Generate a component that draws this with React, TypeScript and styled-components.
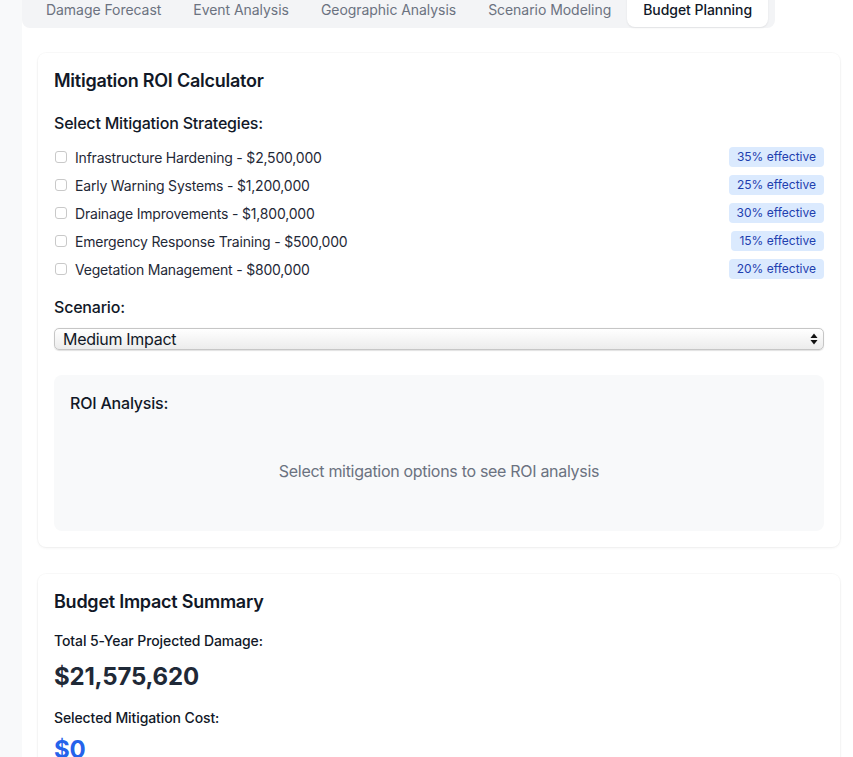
import React from "react";
import styled, { createGlobalStyle } from "styled-components";

const GlobalStyle = createGlobalStyle`
  html, body { margin: 0; padding: 0; background: #ffffff; }
  body { font-family: Inter, "Noto Sans", "Liberation Sans", sans-serif; color: #111827; overflow: hidden; }
  * { box-sizing: border-box; }
`;

const Shell = styled.div`
  display: flex;
  width: 853px;
  height: 757px;
  overflow: hidden;
`;

const Sidebar = styled.div`
  width: 22px;
  flex: none;
  background: #f8f9fa;
`;

const Main = styled.div`
  flex: 1;
  display: flex;
  flex-direction: column;
  background: #ffffff;
  margin-top: -10px;
`;

const TabBar = styled.div`
  align-self: flex-start;
  display: flex;
  align-items: stretch;
  background: #f3f4f6;
  border-radius: 0 0 8px 8px;
  padding: 0 7px 1px 8px;
`;

const Tab = styled.div<{ $active?: boolean }>`
  padding: 10px 16px 7px;
  font-size: 14px;
  line-height: 20px;
  letter-spacing: -0.05px;
  font-weight: ${(p) => (p.$active ? 500 : 400)};
  color: ${(p) => (p.$active ? "#111827" : "#6b7280")};
  background: ${(p) => (p.$active ? "#ffffff" : "transparent")};
  border-radius: 0 0 8px 8px;
  box-shadow: ${(p) => (p.$active ? "0 1px 2px rgba(0,0,0,0.08)" : "none")};
  white-space: nowrap;
`;

const Content = styled.div`
  display: flex;
  flex-direction: column;
  gap: 27px;
  padding: 25px 13px 0 16px;
`;

const Card = styled.section`
  background: #ffffff;
  border-radius: 8px;
  box-shadow: 0 1px 3px rgba(0, 0, 0, 0.06), 0 0 0 1px rgba(0, 0, 0, 0.02);
  padding: 16px;
`;

const CardTitle = styled.h2<{ $gap: number }>`
  margin: 0 0 ${(p) => p.$gap}px;
  font-size: 18px;
  line-height: 24px;
  font-weight: 600;
  letter-spacing: -0.25px;
  color: #111827;
`;

const SectionLabel = styled.h3<{ $gap: number }>`
  margin: 0 0 ${(p) => p.$gap}px;
  font-size: 16px;
  line-height: 24px;
  font-weight: 500;
  letter-spacing: -0.2px;
  color: #111827;
`;

const OptionList = styled.div`
  display: flex;
  flex-direction: column;
  gap: 8px;
  margin-bottom: 16px;
`;

const OptionRow = styled.label`
  display: flex;
  align-items: center;
  height: 20px;
  font-size: 14px;
  color: #1f2937;
`;

const Check = styled.input`
  appearance: none;
  width: 12px;
  height: 12px;
  margin: 0 8px 0 1px;
  border: 1px solid #c9c9c9;
  border-radius: 3px;
  background: #ffffff;
  flex: none;
`;

const OptionText = styled.span`
  flex: 1;
  letter-spacing: -0.2px;
`;

const Badge = styled.span`
  background: #dbeafe;
  color: #1e40af;
  font-size: 12px;
  line-height: 20px;
  padding: 0 8px;
  border-radius: 4px;
`;

const SelectWrap = styled.div`
  position: relative;
  margin-bottom: 25px;
`;

const Select = styled.select`
  appearance: none;
  width: 100%;
  height: 22px;
  padding: 0 24px 0 8px;
  font-family: inherit;
  font-size: 16px;
  letter-spacing: -0.3px;
  color: #111827;
  background: linear-gradient(#ffffff, #ececec);
  border: 1px solid #c6c6c6;
  border-radius: 5px;
  box-shadow: 0 0.5px 1px rgba(0, 0, 0, 0.12);
`;

const SelectArrows = styled.svg`
  position: absolute;
  right: 6px;
  top: 5px;
  pointer-events: none;
`;

const AnalysisBox = styled.div`
  background: #f8f9fa;
  border-radius: 8px;
  padding: 16px 16px 17px;
`;

const AnalysisTitle = styled.h4`
  margin: 0 0 12px;
  font-size: 16px;
  line-height: 24px;
  font-weight: 500;
  letter-spacing: -0.2px;
  color: #111827;
`;

const EmptyText = styled.p`
  margin: 0;
  padding: 32px 0 31px;
  text-align: center;
  font-size: 16px;
  line-height: 24px;
  letter-spacing: -0.3px;
  color: #6b7280;
`;

const StatLabel = styled.div`
  font-size: 14px;
  line-height: 20px;
  font-weight: 500;
  letter-spacing: -0.1px;
  color: #111827;
`;

const StatValue = styled.div<{ $color: string; $top: number; $bottom: number }>`
  margin: ${(p) => p.$top}px 0 ${(p) => p.$bottom}px;
  font-size: 24px;
  line-height: 32px;
  font-weight: 700;
  letter-spacing: -0.2px;
  color: ${(p) => p.$color};
`;

const tabs = ["Damage Forecast", "Event Analysis", "Geographic Analysis", "Scenario Modeling", "Budget Planning"];

const strategies = [
  { name: "Infrastructure Hardening", cost: "$2,500,000", eff: 35 },
  { name: "Early Warning Systems", cost: "$1,200,000", eff: 25 },
  { name: "Drainage Improvements", cost: "$1,800,000", eff: 30 },
  { name: "Emergency Response Training", cost: "$500,000", eff: 15 },
  { name: "Vegetation Management", cost: "$800,000", eff: 20 },
];

export default function App() {
  return (
    <>
      <GlobalStyle />
      <Shell>
        <Sidebar />
        <Main>
          <TabBar>
            {tabs.map((t) => (
              <Tab key={t} $active={t === "Budget Planning"}>
                {t}
              </Tab>
            ))}
          </TabBar>
          <Content>
            <Card>
              <CardTitle $gap={18}>Mitigation ROI Calculator</CardTitle>
              <SectionLabel $gap={12}>Select Mitigation Strategies:</SectionLabel>
              <OptionList>
                {strategies.map((s) => (
                  <OptionRow key={s.name}>
                    <Check type="checkbox" />
                    <OptionText>
                      {s.name} - {s.cost}
                    </OptionText>
                    <Badge>{s.eff}% effective</Badge>
                  </OptionRow>
                ))}
              </OptionList>
              <SectionLabel $gap={9}>Scenario:</SectionLabel>
              <SelectWrap>
                <Select defaultValue="medium">
                  <option value="low">Low Impact</option>
                  <option value="medium">Medium Impact</option>
                  <option value="high">High Impact</option>
                </Select>
                <SelectArrows width="8" height="12" viewBox="0 0 8 12">
                  <path d="M4 0.5 L7.5 5 H0.5 Z" fill="#111" />
                  <path d="M4 11.5 L7.5 7 H0.5 Z" fill="#111" />
                </SelectArrows>
              </SelectWrap>
              <AnalysisBox>
                <AnalysisTitle>ROI Analysis:</AnalysisTitle>
                <EmptyText>Select mitigation options to see ROI analysis</EmptyText>
              </AnalysisBox>
            </Card>
            <Card>
              <CardTitle $gap={17}>Budget Impact Summary</CardTitle>
              <StatLabel>Total 5-Year Projected Damage:</StatLabel>
              <StatValue $color="#1f2937" $top={10} $bottom={15}>$21,575,620</StatValue>
              <StatLabel>Selected Mitigation Cost:</StatLabel>
              <StatValue $color="#2563eb" $top={6} $bottom={0}>$0</StatValue>
            </Card>
          </Content>
        </Main>
      </Shell>
    </>
  );
}
